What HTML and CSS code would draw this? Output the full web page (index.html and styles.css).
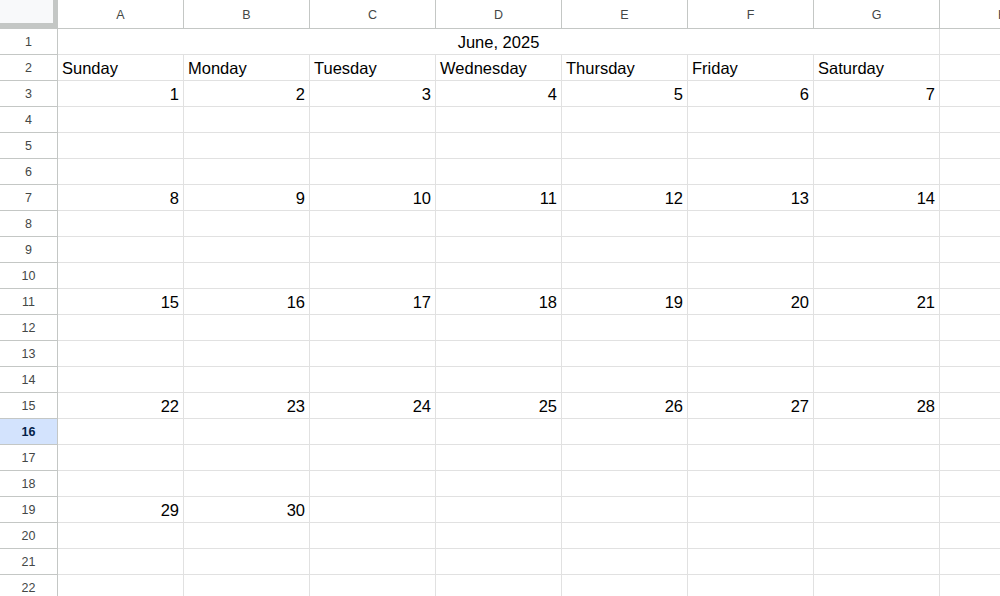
FILE: index.html
```html
<!DOCTYPE html>
<html>
<head>
<meta charset="utf-8">
<link rel="stylesheet" href="styles.css">
</head>
<body>
<div class="sheet">
  <div class="corner"><div class="corner-fill"></div></div>
  <div class="ch">A</div><div class="ch">B</div><div class="ch">C</div><div class="ch">D</div><div class="ch">E</div><div class="ch">F</div><div class="ch">G</div><div class="ch">H</div>

  <div class="rh">1</div><div class="c merged">June, 2025</div><div class="c"></div>

  <div class="rh">2</div><div class="c">Sunday</div><div class="c">Monday</div><div class="c">Tuesday</div><div class="c">Wednesday</div><div class="c">Thursday</div><div class="c">Friday</div><div class="c">Saturday</div><div class="c"></div>

  <div class="rh">3</div><div class="c n">1</div><div class="c n">2</div><div class="c n">3</div><div class="c n">4</div><div class="c n">5</div><div class="c n">6</div><div class="c n">7</div><div class="c"></div>
  <div class="rh">4</div><div class="c"></div><div class="c"></div><div class="c"></div><div class="c"></div><div class="c"></div><div class="c"></div><div class="c"></div><div class="c"></div>
  <div class="rh">5</div><div class="c"></div><div class="c"></div><div class="c"></div><div class="c"></div><div class="c"></div><div class="c"></div><div class="c"></div><div class="c"></div>
  <div class="rh">6</div><div class="c"></div><div class="c"></div><div class="c"></div><div class="c"></div><div class="c"></div><div class="c"></div><div class="c"></div><div class="c"></div>

  <div class="rh">7</div><div class="c n">8</div><div class="c n">9</div><div class="c n">10</div><div class="c n">11</div><div class="c n">12</div><div class="c n">13</div><div class="c n">14</div><div class="c"></div>
  <div class="rh">8</div><div class="c"></div><div class="c"></div><div class="c"></div><div class="c"></div><div class="c"></div><div class="c"></div><div class="c"></div><div class="c"></div>
  <div class="rh">9</div><div class="c"></div><div class="c"></div><div class="c"></div><div class="c"></div><div class="c"></div><div class="c"></div><div class="c"></div><div class="c"></div>
  <div class="rh">10</div><div class="c"></div><div class="c"></div><div class="c"></div><div class="c"></div><div class="c"></div><div class="c"></div><div class="c"></div><div class="c"></div>

  <div class="rh">11</div><div class="c n">15</div><div class="c n">16</div><div class="c n">17</div><div class="c n">18</div><div class="c n">19</div><div class="c n">20</div><div class="c n">21</div><div class="c"></div>
  <div class="rh">12</div><div class="c"></div><div class="c"></div><div class="c"></div><div class="c"></div><div class="c"></div><div class="c"></div><div class="c"></div><div class="c"></div>
  <div class="rh">13</div><div class="c"></div><div class="c"></div><div class="c"></div><div class="c"></div><div class="c"></div><div class="c"></div><div class="c"></div><div class="c"></div>
  <div class="rh">14</div><div class="c"></div><div class="c"></div><div class="c"></div><div class="c"></div><div class="c"></div><div class="c"></div><div class="c"></div><div class="c"></div>

  <div class="rh">15</div><div class="c n">22</div><div class="c n">23</div><div class="c n">24</div><div class="c n">25</div><div class="c n">26</div><div class="c n">27</div><div class="c n">28</div><div class="c"></div>
  <div class="rh sel">16</div><div class="c"></div><div class="c"></div><div class="c"></div><div class="c"></div><div class="c"></div><div class="c"></div><div class="c"></div><div class="c"></div>
  <div class="rh">17</div><div class="c"></div><div class="c"></div><div class="c"></div><div class="c"></div><div class="c"></div><div class="c"></div><div class="c"></div><div class="c"></div>
  <div class="rh">18</div><div class="c"></div><div class="c"></div><div class="c"></div><div class="c"></div><div class="c"></div><div class="c"></div><div class="c"></div><div class="c"></div>

  <div class="rh">19</div><div class="c n">29</div><div class="c n">30</div><div class="c"></div><div class="c"></div><div class="c"></div><div class="c"></div><div class="c"></div><div class="c"></div>
  <div class="rh">20</div><div class="c"></div><div class="c"></div><div class="c"></div><div class="c"></div><div class="c"></div><div class="c"></div><div class="c"></div><div class="c"></div>
  <div class="rh">21</div><div class="c"></div><div class="c"></div><div class="c"></div><div class="c"></div><div class="c"></div><div class="c"></div><div class="c"></div><div class="c"></div>
  <div class="rh">22</div><div class="c"></div><div class="c"></div><div class="c"></div><div class="c"></div><div class="c"></div><div class="c"></div><div class="c"></div><div class="c"></div>
</div>
</body>
</html>
```

FILE: styles.css
```css
html, body {
  margin: 0;
  padding: 0;
  background: #ffffff;
  overflow: hidden;
}
body {
  width: 1000px;
  height: 596px;
}
.sheet {
  display: grid;
  grid-template-columns: 58px repeat(8, 126px);
  grid-template-rows: 29px;
  grid-auto-rows: 26px;
  width: 1066px;
}
.corner {
  box-sizing: border-box;
  border-right: 1px solid #c4c7c5;
  border-bottom: 1px solid #c4c7c5;
  background: #c4c7c5;
}
.corner-fill {
  width: 53px;
  height: 23px;
  background: #f8f9fa;
}
.ch {
  box-sizing: border-box;
  border-right: 1px solid #c4c7c5;
  border-bottom: 1px solid #c4c7c5;
  display: flex;
  align-items: center;
  justify-content: center;
  font-family: "Liberation Sans", Arial, sans-serif;
  font-size: 12.5px;
  color: #444746;
  padding-top: 1px;
}
.rh {
  box-sizing: border-box;
  border-right: 1px solid #c4c7c5;
  border-bottom: 1px solid #c4c7c5;
  display: flex;
  align-items: center;
  justify-content: center;
  font-family: "Liberation Sans", Arial, sans-serif;
  font-size: 12.5px;
  color: #444746;
}
.rh.sel {
  background: #d3e3fd;
  color: #041e49;
  font-weight: bold;
}
.c {
  box-sizing: border-box;
  border-right: 1px solid #e1e1e1;
  border-bottom: 1px solid #e1e1e1;
  display: flex;
  align-items: flex-end;
  padding: 0 4px 2px 4px;
  font-family: "Liberation Sans", Arial, sans-serif;
  font-size: 16.5px;
  line-height: 20px;
  color: #000000;
  white-space: nowrap;
  overflow: hidden;
}
.c.n {
  justify-content: flex-end;
}
.c.merged {
  grid-column: span 7;
  justify-content: center;
}
```
